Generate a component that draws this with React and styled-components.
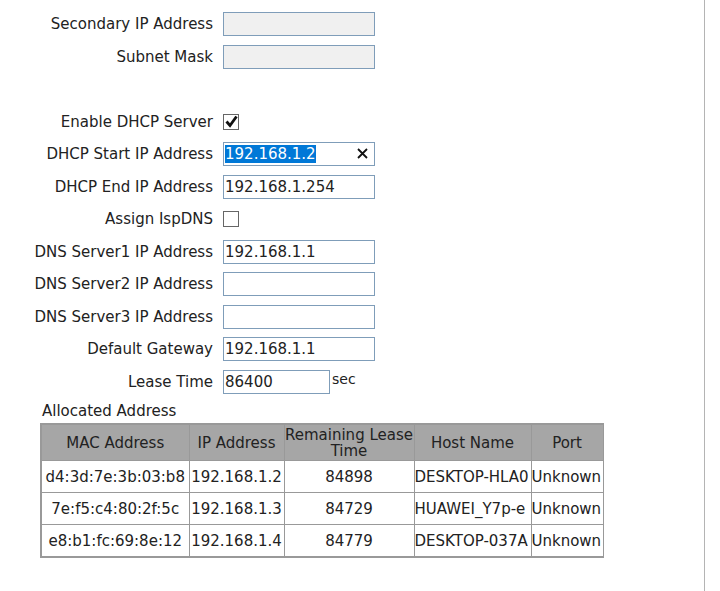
import styled, { createGlobalStyle } from "styled-components";

const GlobalStyle = createGlobalStyle`
  body {
    margin: 0;
    background: #fff;
    font-family: "DejaVu Sans", Verdana, sans-serif;
    font-size: 15px;
    color: #222;
  }
`;

const fields = [
  { label: "Secondary IP Address", type: "text", disabled: true },
  { label: "Subnet Mask", type: "text", disabled: true },
  { spacer: true },
  { label: "Enable DHCP Server", type: "check", checked: true },
  { label: "DHCP Start IP Address", type: "text", value: "192.168.1.2", selected: true },
  { label: "DHCP End IP Address", type: "text", value: "192.168.1.254" },
  { label: "Assign IspDNS", type: "check" },
  { label: "DNS Server1 IP Address", type: "text", value: "192.168.1.1" },
  { label: "DNS Server2 IP Address", type: "text" },
  { label: "DNS Server3 IP Address", type: "text" },
  { label: "Default Gateway", type: "text", value: "192.168.1.1" },
  { label: "Lease Time", type: "lease", value: "86400" },
];

const leases = [
  ["d4:3d:7e:3b:03:b8", "192.168.1.2", "84898", "DESKTOP-HLA0", "Unknown"],
  ["7e:f5:c4:80:2f:5c", "192.168.1.3", "84729", "HUAWEI_Y7p-e", "Unknown"],
  ["e8:b1:fc:69:8e:12", "192.168.1.4", "84779", "DESKTOP-037A", "Unknown"],
];

const CheckIcon = () => (
  <svg width="13" height="13" viewBox="0 0 13 13">
    <path d="M1.5 6.5 L5 10.5 L11.5 1.5" fill="none" stroke="#111" strokeWidth="2.8" />
  </svg>
);

const ClearIcon = () => (
  <svg width="11" height="11" viewBox="0 0 11 11">
    <path d="M1 1 L10 10 M10 1 L1 10" stroke="#111" strokeWidth="1.8" />
  </svg>
);

const Field = ({ f }) => {
  if (f.type === "check") {
    return <CheckBox>{f.checked && <CheckIcon />}</CheckBox>;
  }
  if (f.type === "lease") {
    return (
      <LeaseWrap>
        <TextBox $width={107}>{f.value}</TextBox>
        <Unit>sec</Unit>
      </LeaseWrap>
    );
  }
  return (
    <TextBox $disabled={f.disabled}>
      {f.selected ? <Selected>{f.value}</Selected> : f.value}
      {f.selected && (
        <Clear>
          <ClearIcon />
        </Clear>
      )}
    </TextBox>
  );
};

const App = () => (
  <>
    <GlobalStyle />
    <Page>
      <Form>
        {fields.map((f, i) =>
          f.spacer ? (
            <Spacer key={i} />
          ) : (
            <Row key={i}>
              <Label>{f.label}</Label>
              <Field f={f} />
            </Row>
          )
        )}
      </Form>
      <Caption>Allocated Address</Caption>
      <Table>
        <colgroup>
          <col style={{ width: 148 }} />
          <col style={{ width: 95 }} />
          <col style={{ width: 130 }} />
          <col style={{ width: 117 }} />
          <col style={{ width: 72 }} />
        </colgroup>
        <thead>
          <tr>
            <Th>MAC Address</Th>
            <Th>IP Address</Th>
            <Th>Remaining Lease Time</Th>
            <Th>Host Name</Th>
            <Th>Port</Th>
          </tr>
        </thead>
        <tbody>
          {leases.map((r, i) => (
            <tr key={i}>
              <Td>{r[0]}</Td>
              <Td>{r[1]}</Td>
              <Td>{r[2]}</Td>
              <Td $left>{r[3]}</Td>
              <Td $left>{r[4]}</Td>
            </tr>
          ))}
        </tbody>
      </Table>
    </Page>
  </>
);

const Page = styled.div`
  width: 705px;
  height: 591px;
  box-sizing: border-box;
  border-right: 1px solid #b4b4b4;
  padding-top: 8px;
`;

const Form = styled.div`
  display: flex;
  flex-direction: column;
`;

const Row = styled.div`
  display: grid;
  grid-template-columns: 213px auto;
  column-gap: 10px;
  align-items: center;
  height: 32.5px;
`;

const Spacer = styled.div`
  height: 32.5px;
`;

const Label = styled.div`
  text-align: right;
  white-space: nowrap;
`;

const TextBox = styled.div`
  position: relative;
  box-sizing: border-box;
  width: ${(p) => p.$width || 152}px;
  height: 24px;
  border: 1px solid #7f9db9;
  background: ${(p) => (p.$disabled ? "#f0f0f0" : "#fff")};
  padding: 0 0 0 1px;
  line-height: 22px;
  white-space: nowrap;
  overflow: hidden;
`;

const Selected = styled.span`
  background: #0078d7;
  color: #fff;
`;

const Clear = styled.span`
  position: absolute;
  right: 6px;
  top: 5px;
  display: flex;
`;

const CheckBox = styled.div`
  box-sizing: border-box;
  width: 16px;
  height: 16px;
  border: 1px solid #666;
  background: #fff;
  display: flex;
  align-items: center;
  justify-content: center;
`;

const LeaseWrap = styled.div`
  display: flex;
  align-items: flex-start;
  gap: 2px;
`;

const Unit = styled.span`
  font-size: 14px;
  line-height: 16px;
  margin-top: 1px;
`;

const Caption = styled.div`
  margin: 4px 0 0 42px;
  height: 21px;
  line-height: 18px;
`;

const Table = styled.table`
  margin-left: 40px;
  border-collapse: collapse;
  table-layout: fixed;
  width: 562px;
  border: 2px solid #999;
  border-right-width: 1px;
`;

const Th = styled.th`
  background: #a6a6a6;
  border: 1px solid #999;
  font-weight: normal;
  height: 35px;
  padding: 0;
  line-height: 16px;
  text-align: center;
`;

const Td = styled.td`
  border: 1px solid #999;
  height: 31px;
  padding: 0;
  overflow: hidden;
  white-space: nowrap;
  text-align: ${(p) => (p.$left ? "left" : "center")};
`;

export default App;
